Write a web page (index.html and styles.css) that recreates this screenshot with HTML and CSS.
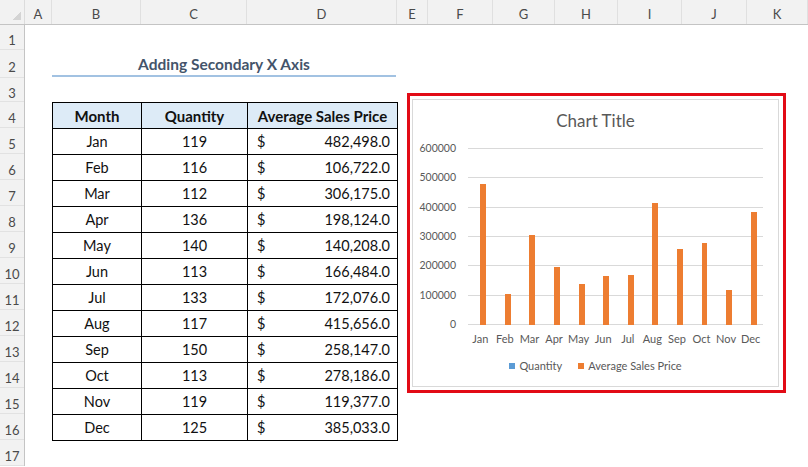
FILE: index.html
```html
<!DOCTYPE html>
<html lang="en">
<head>
<meta charset="utf-8">
<title>Adding Secondary X Axis</title>
<link rel="stylesheet" href="styles.css">
</head>
<body>
<div class="page">
  <div class="colhead">
    <div class="corner"></div>
    <div class="ch">A</div>
    <div class="ch">B</div>
    <div class="ch">C</div>
    <div class="ch">D</div>
    <div class="ch">E</div>
    <div class="ch">F</div>
    <div class="ch">G</div>
    <div class="ch">H</div>
    <div class="ch">I</div>
    <div class="ch">J</div>
    <div class="ch">K</div>
  </div>
  <div class="sheet">
    <div class="rowhead">
      <div class="rh">1</div>
      <div class="rh">2</div>
      <div class="rh">3</div>
      <div class="rh">4</div>
      <div class="rh">5</div>
      <div class="rh">6</div>
      <div class="rh">7</div>
      <div class="rh">8</div>
      <div class="rh">9</div>
      <div class="rh">10</div>
      <div class="rh">11</div>
      <div class="rh">12</div>
      <div class="rh">13</div>
      <div class="rh">14</div>
      <div class="rh">15</div>
      <div class="rh">16</div>
      <div class="rh">17</div>
    </div>
    <div class="cells">
      <div class="title">Adding Secondary X Axis</div>
      <table class="data">
        <colgroup><col class="c-month"><col class="c-qty"><col class="c-price"></colgroup>
        <thead>
          <tr><th>Month</th><th>Quantity</th><th>Average Sales Price</th></tr>
        </thead>
        <tbody>
          <tr><td>Jan</td><td>119</td><td><div class="money"><span>$</span><span>482,498.0</span></div></td></tr>
          <tr><td>Feb</td><td>116</td><td><div class="money"><span>$</span><span>106,722.0</span></div></td></tr>
          <tr><td>Mar</td><td>112</td><td><div class="money"><span>$</span><span>306,175.0</span></div></td></tr>
          <tr><td>Apr</td><td>136</td><td><div class="money"><span>$</span><span>198,124.0</span></div></td></tr>
          <tr><td>May</td><td>140</td><td><div class="money"><span>$</span><span>140,208.0</span></div></td></tr>
          <tr><td>Jun</td><td>113</td><td><div class="money"><span>$</span><span>166,484.0</span></div></td></tr>
          <tr><td>Jul</td><td>133</td><td><div class="money"><span>$</span><span>172,076.0</span></div></td></tr>
          <tr><td>Aug</td><td>117</td><td><div class="money"><span>$</span><span>415,656.0</span></div></td></tr>
          <tr><td>Sep</td><td>150</td><td><div class="money"><span>$</span><span>258,147.0</span></div></td></tr>
          <tr><td>Oct</td><td>113</td><td><div class="money"><span>$</span><span>278,186.0</span></div></td></tr>
          <tr><td>Nov</td><td>119</td><td><div class="money"><span>$</span><span>119,377.0</span></div></td></tr>
          <tr><td>Dec</td><td>125</td><td><div class="money"><span>$</span><span>385,033.0</span></div></td></tr>
        </tbody>
      </table>
    </div>
  </div>

  <div class="chart">
    <div class="chart-inner">
      <div class="chart-title">Chart Title</div>
      <div class="plot-row">
        <div class="y-axis">
          <span>600000</span><span>500000</span><span>400000</span><span>300000</span><span>200000</span><span>100000</span><span>0</span>
        </div>
        <div class="plot">
          <div class="cat"><div class="bar q" style="height:0.03px"></div><div class="bar p" style="height:141.5px"></div></div>
          <div class="cat"><div class="bar q" style="height:0.03px"></div><div class="bar p" style="height:31.3px"></div></div>
          <div class="cat"><div class="bar q" style="height:0.03px"></div><div class="bar p" style="height:89.8px"></div></div>
          <div class="cat"><div class="bar q" style="height:0.04px"></div><div class="bar p" style="height:58.1px"></div></div>
          <div class="cat"><div class="bar q" style="height:0.04px"></div><div class="bar p" style="height:41.1px"></div></div>
          <div class="cat"><div class="bar q" style="height:0.03px"></div><div class="bar p" style="height:48.8px"></div></div>
          <div class="cat"><div class="bar q" style="height:0.04px"></div><div class="bar p" style="height:50.5px"></div></div>
          <div class="cat"><div class="bar q" style="height:0.03px"></div><div class="bar p" style="height:121.9px"></div></div>
          <div class="cat"><div class="bar q" style="height:0.04px"></div><div class="bar p" style="height:75.7px"></div></div>
          <div class="cat"><div class="bar q" style="height:0.03px"></div><div class="bar p" style="height:81.6px"></div></div>
          <div class="cat"><div class="bar q" style="height:0.03px"></div><div class="bar p" style="height:35.0px"></div></div>
          <div class="cat"><div class="bar q" style="height:0.04px"></div><div class="bar p" style="height:112.9px"></div></div>
        </div>
      </div>
      <div class="x-axis">
        <span>Jan</span><span>Feb</span><span>Mar</span><span>Apr</span><span>May</span><span>Jun</span><span>Jul</span><span>Aug</span><span>Sep</span><span>Oct</span><span>Nov</span><span>Dec</span>
      </div>
      <div class="legend">
        <div class="key"><span class="swatch q"></span><span>Quantity</span></div>
        <div class="key"><span class="swatch p"></span><span>Average Sales Price</span></div>
      </div>
    </div>
  </div>
</div>
</body>
</html>
```

FILE: styles.css
```css
html, body {
  margin: 0;
  padding: 0;
  background: #ffffff;
}

body {
  font-family: Lato, "Open Sans", "DejaVu Sans", sans-serif;
  width: 808px;
  height: 467px;
  overflow: hidden;
}

.page {
  position: relative;
  width: 808px;
  height: 467px;
  overflow: hidden;
}

/* column header */
.colhead {
  display: grid;
  grid-template-columns: 25px 27px 89px 106px 150px 31px 65px 62px 63px 64px 65px 61px;
  height: 25px;
  box-sizing: border-box;
  background: #f2f2f2;
  border-bottom: 1px solid #c4c4c4;
}

.corner {
  position: relative;
  border-right: 1px solid #dcdcdc;
}

.corner::after {
  content: "";
  position: absolute;
  right: 3px;
  bottom: 4px;
  width: 9px;
  height: 9px;
  background: linear-gradient(135deg, transparent 50%, #d4d4d4 50%);
}

.ch {
  display: flex;
  align-items: center;
  justify-content: center;
  padding-top: 3px;
  font-size: 13px;
  color: #4a4a4a;
  border-right: 1px solid #e0e0e0;
}

/* sheet body */
.sheet {
  display: flex;
}

.rowhead {
  width: 25px;
  box-sizing: border-box;
  background: #f2f2f2;
  border-right: 1px solid #c4c4c4;
  display: grid;
  grid-template-rows: 25px 28px 24px repeat(14, 26px);
}

.rh {
  display: flex;
  align-items: center;
  justify-content: center;
  padding-top: 6px;
  box-sizing: border-box;
  font-size: 13px;
  color: #4a4a4a;
  border-bottom: 1px solid #e2e2e2;
}

.cells {
  padding-left: 27px;
  padding-top: 25px;
  display: flex;
  flex-direction: column;
  align-items: flex-start;
}

.title {
  width: 344px;
  height: 27px;
  box-sizing: border-box;
  padding-top: 4px;
  line-height: 20px;
  border-bottom: 2px solid #a2c2e2;
  text-align: center;
  font-weight: 700;
  font-size: 15.5px;
  color: #44546a;
  margin-bottom: 25px;
}

/* data table */
.data {
  border-collapse: collapse;
  table-layout: fixed;
  width: 345px;
  font-size: 14.5px;
  color: #111;
}

.c-month { width: 89px; }
.c-qty { width: 106px; }
.c-price { width: 150px; }

.data th,
.data td {
  border: 1px solid #000;
  height: 25px;
  padding: 0;
  text-align: center;
  vertical-align: middle;
  line-height: 18px;
}

.data th {
  background: #ddebf7;
  font-weight: 700;
  font-size: 15px;
}

.money {
  display: flex;
  justify-content: space-between;
  padding: 0 7px 0 9px;
}

/* chart */
.chart {
  position: absolute;
  left: 407px;
  top: 93px;
  width: 379px;
  height: 300px;
  box-sizing: border-box;
  border: 3px solid #e20b16;
  padding: 3px 4px 3px 2px;
  background: #ffffff;
}

.chart-inner {
  height: 100%;
  box-sizing: border-box;
  border: 1px solid #d9d9d9;
  display: flex;
  flex-direction: column;
  color: #595959;
}

.chart-title {
  padding-top: 11px;
  line-height: 20px;
  font-size: 17px;
  text-align: center;
}

.plot-row {
  margin-top: 11px;
  display: grid;
  grid-template-columns: 43px 295px;
  column-gap: 12px;
  height: 188px;
}

.y-axis {
  display: flex;
  flex-direction: column;
  justify-content: space-between;
  align-items: flex-end;
  font-size: 10.5px;
  line-height: 12px;
}

.plot {
  margin-top: 6px;
  height: 177px;
  background: repeating-linear-gradient(to bottom, #d9d9d9 0, #d9d9d9 1px, transparent 1px, transparent 29.333px);
  display: grid;
  grid-template-columns: repeat(12, 1fr);
}

.cat {
  display: flex;
  justify-content: center;
  align-items: flex-end;
}

.bar {
  width: 5.9px;
}

.q { background: #5b9bd5; }
.p { background: #ed7d31; }

.x-axis {
  display: grid;
  grid-template-columns: repeat(12, 1fr);
  width: 295px;
  margin-left: 55px;
  margin-top: 2px;
  font-size: 11px;
  line-height: 14px;
  text-align: center;
}

.legend {
  margin-top: 13px;
  display: flex;
  justify-content: center;
  gap: 16px;
  font-size: 11px;
  line-height: 14px;
}

.key {
  display: flex;
  align-items: center;
  gap: 4px;
}

.swatch {
  width: 6px;
  height: 6px;
}
```
